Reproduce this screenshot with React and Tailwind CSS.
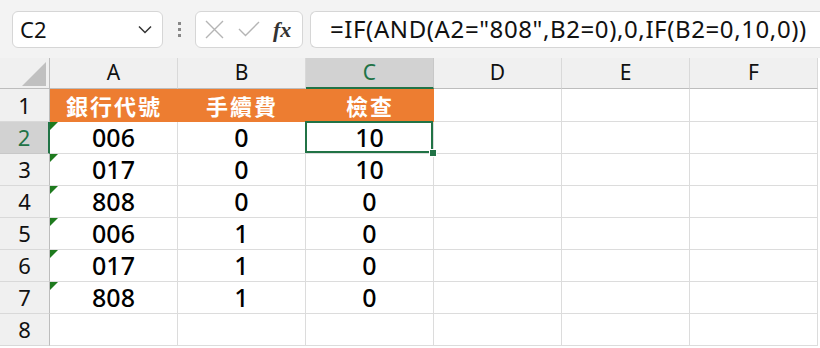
const cols = ['A', 'B', 'C', 'D', 'E', 'F'];
const rows = [
  ['006', '0', '10'],
  ['017', '0', '10'],
  ['808', '0', '0'],
  ['006', '1', '0'],
  ['017', '1', '0'],
  ['808', '1', '0'],
  ['', '', ''],
];
const latin = { fontFamily: '"Noto Sans", "Noto Sans CJK TC", sans-serif' };
const cjk = { fontFamily: '"Noto Sans CJK TC", sans-serif' };

function Toolbar() {
  return (
    <div className="flex h-[58px] items-center bg-[#f3f3f3] pl-[12px]">
      <div className="flex h-[37px] w-[151px] items-center justify-between rounded-[6px] border border-[#d6d6d6] bg-white pl-[7px] pr-[10px]">
        <span className="text-[22px] text-[#111]" style={latin}>C2</span>
        <svg width="14" height="9" viewBox="0 0 14 9" fill="none" stroke="#333" strokeWidth="1.5">
          <path d="M1 1.5 L7 7.5 L13 1.5" />
        </svg>
      </div>
      <div className="ml-[15px] mr-[14px] flex flex-col gap-[3px]">
        <span className="h-[3px] w-[3px] bg-[#888]" />
        <span className="h-[3px] w-[3px] bg-[#888]" />
        <span className="h-[3px] w-[3px] bg-[#888]" />
      </div>
      <div className="flex h-[37px] w-[108px] items-center rounded-[6px] border border-[#d6d6d6] bg-white pl-[9px]">
        <svg width="19" height="19" viewBox="0 0 19 19" stroke="#b5b5b5" strokeWidth="1.4">
          <path d="M1 1 L18 18 M18 1 L1 18" />
        </svg>
        <svg className="ml-[14px]" width="22" height="16" viewBox="0 0 22 16" fill="none" stroke="#b5b5b5" strokeWidth="1.4">
          <path d="M1 8 L7.5 14.5 L21 1" />
        </svg>
        <span className="ml-[13px] text-[22px] font-bold italic text-[#333]" style={{ fontFamily: '"Liberation Serif", serif' }}>fx</span>
      </div>
      <div className="ml-[7px] flex h-[37px] flex-1 items-center rounded-l-[6px] border border-r-0 border-[#d6d6d6] bg-white pl-[19px]">
        <span className="text-[24px] tracking-[0.6px] text-[#111]" style={latin}>=IF(AND(A2="808",B2=0),0,IF(B2=0,10,0))</span>
      </div>
    </div>
  );
}

function Grid() {
  return (
    <div className="grid grid-cols-[50px_repeat(6,128px)] bg-white" style={latin}>
      <div className="relative h-[31px] border-b border-r border-[#bdbdbd] bg-[#f0f0f0]">
        <svg className="absolute bottom-[2px] right-[3px]" width="24" height="24" viewBox="0 0 24 24">
          <path d="M24 0 L24 24 L0 24 Z" fill="#c0c0c0" />
        </svg>
      </div>
      {cols.map((c) =>
        c === 'C' ? (
          <div key={c} className="flex h-[31px] items-center justify-center border-b-2 border-r border-b-[#217346] border-r-[#c8c8c8] bg-[#d2d2d2] text-[21px] text-[#217346]">
            {c}
          </div>
        ) : (
          <div key={c} className="flex h-[31px] items-center justify-center border-b border-r border-b-[#bdbdbd] border-r-[#d9d9d9] bg-[#f0f0f0] text-[21px] text-[#111]">
            {c}
          </div>
        )
      )}

      <div className="flex h-[33px] items-center justify-center border-b border-r border-b-[#d9d9d9] border-r-[#bdbdbd] bg-[#f0f0f0] text-[22px] text-[#111]">1</div>
      {['銀行代號', '手續費', '檢查'].map((t) => (
        <div key={t} className="flex h-[33px] items-center justify-center bg-[#ed7d31] pb-[1px] text-[22px] font-bold tracking-[2px] text-white" style={cjk}>
          {t}
        </div>
      ))}
      {[0, 1, 2].map((i) => (
        <div key={i} className="h-[33px] border-b border-r border-[#dcdcdc]" />
      ))}

      {rows.map((r, i) => {
        const n = i + 2;
        const sel = n === 2;
        return [
          <div key={`h${n}`} className={sel
            ? 'flex h-[32px] items-center justify-center border-b border-r-2 border-b-[#c8c8c8] border-r-[#217346] bg-[#d2d2d2] text-[22px] text-[#217346]'
            : 'flex h-[32px] items-center justify-center border-b border-r border-b-[#d9d9d9] border-r-[#bdbdbd] bg-[#f0f0f0] text-[22px] text-[#111]'}>
            {n}
          </div>,
          ...r.map((v, j) => (
            <div key={`${n}-${j}`} className={`relative flex h-[32px] items-center justify-center border-b border-r border-[#dcdcdc] text-[25px] font-medium text-black ${sel && j === 2 ? 'z-10' : ''}`}>
              {j === 0 && v && (
                <svg className="absolute left-0 top-0" width="8" height="8" viewBox="0 0 8 8">
                  <path d="M0 0 L8 0 L0 8 Z" fill="#1e7a1e" />
                </svg>
              )}
              {sel && j === 2 && (
                <>
                  <div className="absolute -left-[1px] -top-[1px] bottom-0 right-0 border-2 border-[#217346]" />
                  <div className="absolute -bottom-[4px] -right-[4px] h-[8px] w-[8px] border border-white bg-[#217346]" />
                </>
              )}
              <span className="relative">{v}</span>
            </div>
          )),
          ...[0, 1, 2].map((k) => (
            <div key={`${n}-e${k}`} className="h-[32px] border-b border-r border-[#dcdcdc]" />
          )),
        ];
      })}
    </div>
  );
}

export default function App() {
  return (
    <div className="h-[348px] w-[820px] overflow-hidden bg-white">
      <Toolbar />
      <Grid />
    </div>
  );
}
